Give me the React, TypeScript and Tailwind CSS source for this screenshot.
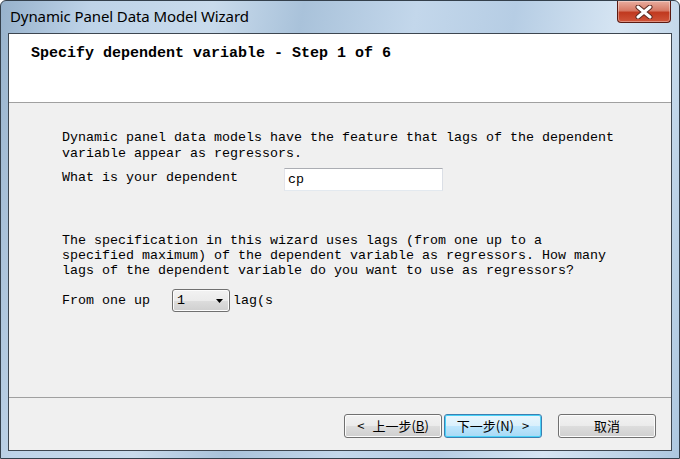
import React from "react";

const mono = "font-['Liberation_Mono','DejaVu_Sans_Mono',monospace]";
const cjk = "font-['Noto_Sans_CJK_SC','Noto_Sans',sans-serif]";

function CloseButton() {
  return (
    <div className="absolute right-[8px] top-0 w-[54px] h-[22px] rounded-b-[4px] border border-t-0 border-[#5a1a12] bg-[linear-gradient(180deg,#e9ad9f_0%,#d77a66_45%,#c0391f_55%,#d0553a_100%)] flex items-center justify-center shadow-[inset_0_0_0_1px_rgba(255,255,255,0.35)]">
      <svg width="18" height="14" viewBox="0 0 18 14">
        <path d="M3 2 L15 12 M15 2 L3 12" stroke="#5b2a22" strokeWidth="5" strokeLinecap="round" />
        <path d="M3 2 L15 12 M15 2 L3 12" stroke="#ffffff" strokeWidth="3" strokeLinecap="round" />
      </svg>
    </div>
  );
}

function Button({ children, focused }: { children: React.ReactNode; focused?: boolean }) {
  return (
    <div
      className={
        "w-[98px] h-[24px] rounded-[3px] border flex items-center justify-center text-[13px] text-black " +
        cjk +
        (focused
          ? " border-[#3c7fb1] bg-[linear-gradient(180deg,#eaf6fd_0%,#d9f0fc_50%,#bee6fd_51%,#a7d9f5_100%)] shadow-[inset_0_0_0_1px_#48d2f8]"
          : " border-[#707070] bg-[linear-gradient(180deg,#f2f2f2_0%,#ebebeb_50%,#dddddd_51%,#cfcfcf_100%)] shadow-[inset_0_0_0_1px_#fcfcfc]")
      }
    >
      {children}
    </div>
  );
}

export default function App() {
  return (
    <div className="relative w-[680px] h-[459px] overflow-hidden rounded-t-[6px] border border-[#34404c] bg-[linear-gradient(100deg,#97b2cc_0%,#bed3e8_12%,#c9dbec_28%,#a9c2da_40%,#c3d7eb_55%,#b6cde4_68%,#d6e5f3_82%,#aec8e0_100%)]">
      {/* Title bar */}
      <div className="h-[32px] flex items-center pl-[9px] pb-[1px]">
        <span className="text-[15px] text-black font-['Noto_Sans','Open_Sans',sans-serif] tracking-[-0.1px]">
          Dynamic Panel Data Model Wizard
        </span>
      </div>
      <CloseButton />

      {/* Client area */}
      <div className="mx-[7px] h-[418px] border border-[#3d4650] bg-[#f0f0f0] flex flex-col">
        <div className="h-[69px] bg-white border-b border-[#a0a0a0] pl-[22px] pt-[10px]">
          <div className={"text-[15px] font-bold leading-[20px] text-black " + mono}>
            Specify dependent variable - Step 1 of 6
          </div>
        </div>

        <div className={"flex-1 pl-[53px] pt-[27px] text-[13.33px] text-black " + mono}>
          <p className="leading-[16px]">
            Dynamic panel data models have the feature that lags of the dependent
            <br />
            variable appear as regressors.
          </p>
          <div className="flex items-center mt-[6px]">
            <span className="w-[222px] leading-[16px] -mt-[3px]">What is your dependent</span>
            <div className="w-[159px] h-[23px] border border-[#abadb3] border-b-[#e3e9ef] border-r-[#dbdfe6] border-l-[#e2e3ea] bg-white pl-[3px] flex items-center">
              cp
            </div>
          </div>
          <p className="leading-[15px] mt-[42px]">
            The specification in this wizard uses lags (from one up to a
            <br />
            specified maximum) of the dependent variable as regressors. How many
            <br />
            lags of the dependent variable do you want to use as regressors?
          </p>
          <div className="flex items-center mt-[11px]">
            <span className="w-[110px] leading-[16px]">From one up</span>
            <div className="w-[58px] h-[23px] rounded-[3px] border border-[#707070] bg-[linear-gradient(180deg,#f2f2f2_0%,#ebebeb_50%,#dddddd_51%,#cfcfcf_100%)] flex items-center pl-[4px] pr-[6px] justify-between shadow-[inset_0_0_0_1px_#fcfcfc]">
              <span>1</span>
              <svg width="7" height="4" viewBox="0 0 7 4">
                <path d="M0 0 H7 L3.5 4 Z" fill="#000" />
              </svg>
            </div>
            <span className="ml-[3px]">lag(s</span>
          </div>
        </div>

        <div className="h-[53px] border-t border-[#a0a0a0] flex items-start justify-end pr-[15px] pt-[16px]">
          <Button>
            <span className="mr-[8px]">&lt;</span>上一步(<span className="underline">B</span>)
          </Button>
          <div className="w-[2px]" />
          <Button focused>
            下一步(N)<span className="ml-[8px]">&gt;</span>
          </Button>
          <div className="w-[16px]" />
          <Button>取消</Button>
        </div>
      </div>
    </div>
  );
}
